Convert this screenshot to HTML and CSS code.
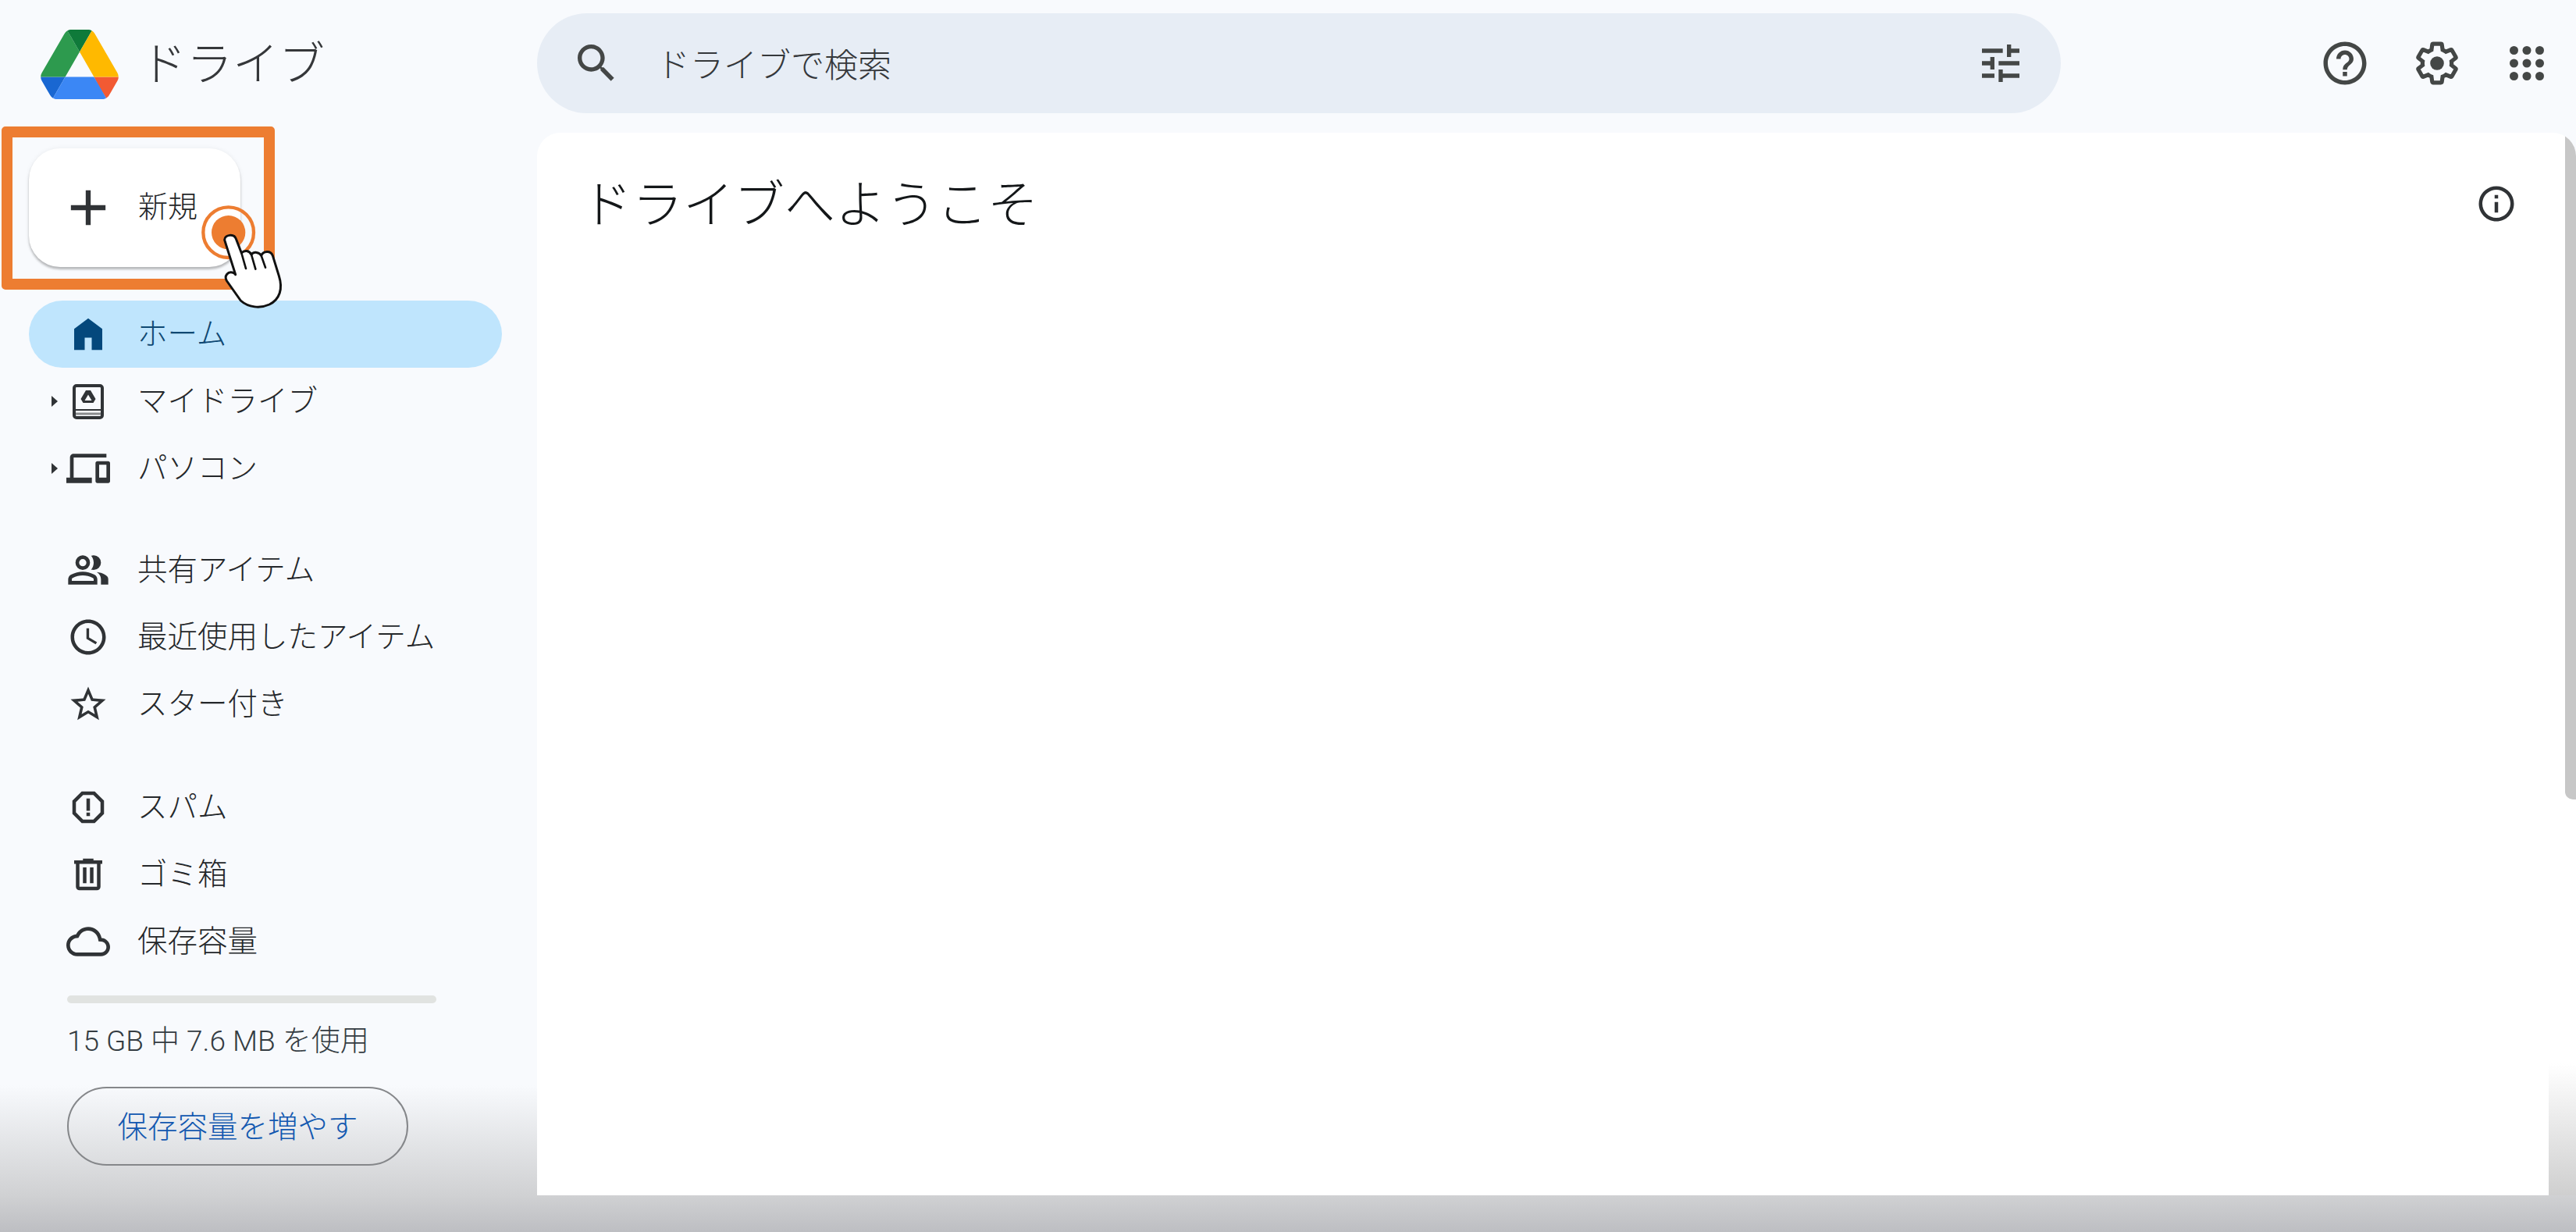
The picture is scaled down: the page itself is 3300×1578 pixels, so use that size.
FILE: index.html
```html
<!DOCTYPE html>
<html lang="ja">
<head>
    <meta charset="UTF-8">
    <meta name="viewport" content="width=device-width, initial-scale=1.0">
    <title>ドライブ</title>
    <link rel="stylesheet" href="styles.css">
</head>
<body>
    <header class="topbar">
        <div class="brand">
            <svg class="brand-logo" viewBox="0 0 87.3 78">
                <path d="m6.6 66.85 3.85 6.65c.8 1.4 1.95 2.5 3.3 3.3l13.75-23.8h-27.5c0 1.55.4 3.1 1.2 4.5z" fill="#1967d2"/>
                <path d="m43.65 25-13.75-23.8c-1.35.8-2.5 1.9-3.3 3.3l-25.4 44a9.06 9.06 0 0 0 -1.2 4.5h27.5z" fill="#2d9a4e"/>
                <path d="m73.55 76.8c1.35-.8 2.5-1.9 3.3-3.3l1.6-2.75 7.65-13.25c.8-1.4 1.2-2.95 1.2-4.5h-27.502l5.852 11.5z" fill="#f25a33"/>
                <path d="m43.65 25 13.75-23.8c-1.35-.8-2.9-1.2-4.5-1.2h-18.5c-1.6 0-3.15.45-4.5 1.2z" fill="#0f7a3a"/>
                <path d="m59.8 53h-32.3l-13.75 23.8c1.35.8 2.9 1.2 4.5 1.2h50.8c1.6 0 3.15-.45 4.5-1.2z" fill="#3b87f5"/>
                <path d="m73.4 26.5-12.7-22c-.8-1.4-1.95-2.5-3.3-3.3l-13.75 23.8 16.15 28h27.45c0-1.55-.4-3.1-1.2-4.5z" fill="#ffb900"/>
            </svg>
            <span class="brand-name">ドライブ</span>
        </div>
        <div class="search">
            <svg class="search-icon" viewBox="0 0 24 24"><path d="M15.5 14h-.79l-.28-.27C15.41 12.59 16 11.11 16 9.5 16 5.91 13.09 3 9.5 3S3 5.91 3 9.5 5.91 16 9.5 16c1.61 0 3.09-.59 4.23-1.57l.27.28v.79l5 4.99L20.49 19l-4.99-5zm-6 0C7.01 14 5 11.99 5 9.5S7.01 5 9.5 5 14 7.01 14 9.5 11.99 14 9.5 14z"/></svg>
            <span class="search-text">ドライブで検索</span>
            <svg class="search-icon" viewBox="0 0 24 24"><path d="M3 17v2h6v-2H3zM3 5v2h10V5H3zm10 16v-2h8v-2h-8v-2h-2v6h2zM7 9v2H3v2h4v2h2V9H7zm14 4v-2H11v2h10zm-6-4h2V7h4V5h-4V3h-2v6z"/></svg>
        </div>
        <div class="actions">
            <svg class="action-icon" viewBox="0 0 24 24"><path d="M11 18h2v-2h-2v2zm1-16C6.48 2 2 6.48 2 12s4.48 10 10 10 10-4.48 10-10S17.52 2 12 2zm0 18c-4.41 0-8-3.59-8-8s3.59-8 8-8 8 3.59 8 8-3.59 8-8 8zm0-14c-2.21 0-4 1.79-4 4h2c0-1.1.9-2 2-2s2 .9 2 2c0 2-3 1.75-3 5h2c0-2.25 3-2.5 3-5 0-2.21-1.79-4-4-4z"/></svg>
            <svg class="action-icon" viewBox="0 0 24 24">
                <path class="gear-line" d="M19.14 12.94c.04-.3.06-.61.06-.94 0-.32-.02-.64-.07-.94l2.03-1.58c.18-.14.23-.41.12-.61l-1.92-3.32c-.12-.22-.37-.29-.59-.22l-2.39.96c-.5-.38-1.03-.7-1.62-.94l-.36-2.54c-.04-.24-.24-.41-.48-.41h-3.84c-.24 0-.43.17-.47.41l-.36 2.54c-.59.24-1.13.57-1.62.94l-2.39-.96c-.22-.08-.47 0-.59.22L2.74 8.87c-.12.21-.08.47.12.61l2.03 1.58c-.05.3-.09.63-.09.94s.02.64.07.94l-2.03 1.58c-.18.14-.23.41-.12.61l1.92 3.32c.12.22.37.29.59.22l2.39-.96c.5.38 1.03.7 1.62.94l.36 2.54c.05.24.24.41.48.41h3.84c.24 0 .44-.17.47-.41l.36-2.54c.59-.24 1.13-.56 1.62-.94l2.39.96c.22.08.47 0 .59-.22l1.92-3.32c.12-.22.07-.47-.12-.61l-2.01-1.58z"/>
                <circle cx="12" cy="12" r="3.2"/>
            </svg>
            <svg class="apps-icon" viewBox="0 0 60 60">
                <circle cx="13.5" cy="13.5" r="5.5"/><circle cx="30" cy="13.5" r="5.5"/><circle cx="46.5" cy="13.5" r="5.5"/>
                <circle cx="13.5" cy="30" r="5.5"/><circle cx="30" cy="30" r="5.5"/><circle cx="46.5" cy="30" r="5.5"/>
                <circle cx="13.5" cy="46.5" r="5.5"/><circle cx="30" cy="46.5" r="5.5"/><circle cx="46.5" cy="46.5" r="5.5"/>
            </svg>
        </div>
    </header>

    <div class="layout">
        <nav class="sidebar">
            <button class="new-button">
                <svg class="plus-icon" viewBox="0 0 24 24"><path d="M19 13h-6v6h-2v-6H5v-2h6V5h2v6h6v2z"/></svg>
                <span class="new-label">新規</span>
                <span class="callout-frame"></span>
                <svg class="callout-hand" viewBox="0 0 375 465">
                    <circle class="ring" cx="128" cy="143" r="97"/>
                    <circle class="dot" cx="128" cy="143" r="65"/>
                    <path class="hand" d="M113 172 C113 152 150 145 158 170 L178 222 C190 210 208 212 216 228 C226 216 246 218 254 232 C262 214 290 212 298 232 L322 310 C338 360 325 400 285 420 C250 436 205 432 175 405 L122 330 C110 312 125 288 150 300 L155 305 Z"/>
                    <path class="hand-line" d="M178 222 L195 282 M216 228 L232 284 M254 232 L270 278"/>
                </svg>
            </button>

            <div class="nav-group first-group">
                <a class="nav-row active">
                    <span class="arrow-slot"></span>
                    <span class="nav-icon"><svg viewBox="0 0 24 24" width="54" height="54"><path d="M4 21V9l8-6 8 6v12h-6v-7h-4v7H4z"/></svg></span>
                    <span class="nav-label">ホーム</span>
                </a>
                <a class="nav-row">
                    <span class="arrow-slot"><i class="arrow"></i></span>
                    <span class="nav-icon">
                        <svg viewBox="0 0 40 45" width="40" height="45">
                            <rect class="book" x="2" y="2" width="36" height="41" rx="3"/>
                            <path class="book-line" d="M2 33h36"/>
                            <path class="book-shelf" d="M4 38h32"/>
                            <path d="M17 8h6l6.500 11-3 5H13.500l-3-5zM20 13.500l-4.500 7.500h9z" fill-rule="evenodd"/>
                        </svg>
                    </span>
                    <span class="nav-label">マイドライブ</span>
                </a>
                <a class="nav-row">
                    <span class="arrow-slot"><i class="arrow"></i></span>
                    <span class="nav-icon"><svg viewBox="0 0 24 24" width="56" height="56"><path d="M4 6h18V4H4c-1.100 0-2 .9-2 2v11H0v3h14v-3H4V6zm19 2h-6c-.55 0-1 .45-1 1v10c0 .55.45 1 1 1h6c.55 0 1-.45 1-1V9c0-.55-.45-1-1-1zm-1 9h-4v-7h4v7z"/></svg></span>
                    <span class="nav-label">パソコン</span>
                </a>
            </div>

            <div class="nav-group shared-group">
                <a class="nav-row">
                    <span class="arrow-slot"></span>
                    <span class="nav-icon"><svg viewBox="0 0 24 24" width="56" height="56"><path d="M1 20v-2.800q0-.85.44-1.560.43-.7 1.160-1.070 1.550-.78 3.150-1.170Q7.350 13 9 13t3.250.39q1.600.39 3.150 1.170.73.37 1.160 1.070.44.7.44 1.560V20H1zm18 0v-3q0-1.100-.61-2.110-.61-1.010-1.740-1.740 1.280.15 2.400.51 1.130.37 2.100.89.9.5 1.380 1.110.47.61.47 1.340v3h-4zM9 12q-1.650 0-2.830-1.180Q5 9.650 5 8t1.180-2.830Q7.350 4 9 4t2.830 1.180Q13 6.350 13 8t-1.180 2.830Q10.650 12 9 12zm10-4q0 1.650-1.180 2.830Q16.650 12 15 12q-.27 0-.7-.06t-.7-.14q.68-.8 1.040-1.770.36-.98.36-2.030t-.36-2.020Q14.280 5 13.600 4.200q.35-.12.7-.16.35-.04.7-.04 1.650 0 2.830 1.180Q19 6.350 19 8zM3 18h12v-.8q0-.28-.14-.5-.14-.22-.36-.35-1.350-.68-2.730-1.010Q10.400 15 9 15t-2.770.34q-1.380.33-2.730 1.010-.23.13-.37.35-.13.22-.13.5v.8zm6-8q.83 0 1.410-.59Q11 8.830 11 8t-.59-1.410Q9.830 6 9 6t-1.410.59Q7 7.180 7 8t.59 1.410Q8.180 10 9 10z"/></svg></span>
                    <span class="nav-label">共有アイテム</span>
                </a>
                <a class="nav-row">
                    <span class="arrow-slot"></span>
                    <span class="nav-icon"><svg viewBox="0 0 24 24" width="54" height="54"><path d="M11.990 2C6.470 2 2 6.480 2 12s4.470 10 9.990 10C17.520 22 22 17.520 22 12S17.520 2 11.990 2zM12 20c-4.420 0-8-3.580-8-8s3.580-8 8-8 8 3.580 8 8-3.580 8-8 8zm.5-13H11v6l5.250 3.150.75-1.230-4.500-2.670V7z"/></svg></span>
                    <span class="nav-label">最近使用したアイテム</span>
                </a>
                <a class="nav-row">
                    <span class="arrow-slot"></span>
                    <span class="nav-icon"><svg viewBox="0 0 24 24" width="54" height="54"><path d="M22 9.240l-7.190-.62L12 2 9.190 8.630 2 9.240l5.460 4.730L5.820 21 12 17.270 18.180 21l-1.630-7.030L22 9.240zM12 15.400l-3.760 2.270 1-4.280-3.320-2.880 4.380-.38L12 6.100l1.710 4.040 4.380.38-3.320 2.880 1 4.280L12 15.400z"/></svg></span>
                    <span class="nav-label">スター付き</span>
                </a>
            </div>

            <div class="nav-group spam-group">
                <a class="nav-row">
                    <span class="arrow-slot"></span>
                    <span class="nav-icon"><svg viewBox="0 0 24 24" width="54" height="54"><path d="M15.730 3H8.270L3 8.270v7.460L8.270 21h7.460L21 15.730V8.270L15.730 3zM19 14.900L14.900 19H9.100L5 14.900V9.100L9.100 5h5.800L19 9.100v5.800z"/><path d="M11 7h2v7h-2zM11 15h2v2h-2z"/></svg></span>
                    <span class="nav-label">スパム</span>
                </a>
                <a class="nav-row">
                    <span class="arrow-slot"></span>
                    <span class="nav-icon"><svg viewBox="0 0 24 24" width="54" height="54"><path d="M7 21q-.825 0-1.410-.59Q5 19.825 5 19V6H4V4h5V3h6v1h5v2h-1v13q0 .825-.59 1.410Q17.825 21 17 21H7zM17 6H7v13h10V6zM9 17h2V8H9v9zm4 0h2V8h-2v9z"/></svg></span>
                    <span class="nav-label">ゴミ箱</span>
                </a>
                <a class="nav-row">
                    <span class="arrow-slot"></span>
                    <span class="nav-icon"><svg viewBox="0 0 24 24" width="56" height="56"><path d="M19.350 10.040C18.670 6.590 15.640 4 12 4 9.110 4 6.600 5.640 5.350 8.040 2.340 8.360 0 10.910 0 14c0 3.310 2.690 6 6 6h13c2.760 0 5-2.240 5-5 0-2.640-2.050-4.780-4.650-4.960zM19 18H6c-2.210 0-4-1.790-4-4 0-2.050 1.530-3.760 3.560-3.970l1.070-.11.5-.95C8.080 7.140 9.940 6 12 6c2.620 0 4.880 1.860 5.390 4.430l.3 1.500 1.530.11c1.560.1 2.780 1.410 2.780 2.960 0 1.650-1.350 3-3 3z"/></svg></span>
                    <span class="nav-label">保存容量</span>
                </a>
            </div>

            <div class="storage">
                <div class="storage-bar"></div>
                <div class="storage-text">15 GB 中 7.6 MB を使用</div>
                <button class="storage-button">保存容量を増やす</button>
            </div>
        </nav>

        <main class="content">
            <section class="panel">
                <h1>ドライブへようこそ</h1>
                <svg class="info-icon" viewBox="0 0 24 24"><path d="M11 7h2v2h-2zm0 4h2v6h-2zm1-9C6.480 2 2 6.480 2 12s4.480 10 10 10 10-4.480 10-10S17.520 2 12 2zm0 18c-4.410 0-8-3.590-8-8s3.590-8 8-8 8 3.590 8 8-3.590 8-8 8z"/></svg>
            </section>
            <div class="track">
                <div class="thumb"></div>
            </div>
        </main>
    </div>
</body>
</html>
```

FILE: styles.css
```css
* {
    box-sizing: border-box;
}
body {
    margin: 0;
    width: 3300px;
    height: 1578px;
    overflow: hidden;
    font-family: "Roboto", "Noto Sans CJK JP", sans-serif;
    font-size: 38.5px;
    font-weight: 300;
    color: #24272a;
    background: linear-gradient(to bottom, #f8fafd 1390px, #d0d1d3 1531px, #bdbec2 1578px);
}
svg {
    fill: #303336;
    display: block;
}

/* top bar */
.topbar {
    display: flex;
    align-items: center;
    height: 170px;
    padding-bottom: 8px;
}
.brand {
    display: flex;
    align-items: center;
    width: 688px;
    padding-left: 52px;
}
.brand-logo {
    width: 100px;
    height: 89px;
    margin-top: 2px;
}
.brand-name {
    margin: 0 0 8px 28px;
    font-size: 59px;
    color: #35373a;
}
.search {
    display: flex;
    align-items: center;
    width: 1952px;
    height: 128px;
    padding: 0 45px 0 44px;
    background-color: #e7edf5;
    border-radius: 64px;
}
.search-icon {
    width: 64px;
    height: 64px;
    fill: #444746;
}
.search-text {
    flex: 1;
    margin: 0 0 2px 45px;
    font-size: 43px;
    color: #35383b;
}
.actions {
    display: flex;
    align-items: center;
    gap: 52px;
    margin-left: auto;
    padding-right: 33px;
}
.action-icon {
    width: 66px;
    height: 66px;
    fill: #444746;
}
.gear-line {
    fill: none;
    stroke: #444746;
    stroke-width: 2;
    transform: scale(.94);
    transform-origin: 12px 12px;
}
.apps-icon {
    width: 60px;
    height: 60px;
    fill: #444746;
}

.layout {
    display: flex;
}

/* left column */
.sidebar {
    width: 688px;
    padding: 20px 0 0 37px;
    flex-shrink: 0;
}
.new-button {
    position: relative;
    display: flex;
    align-items: center;
    width: 271px;
    height: 152px;
    padding: 0 0 0 38px;
    border: none;
    border-radius: 40px;
    background-color: white;
    box-shadow: 0 3px 3px rgba(0, 0, 0, 0.25), 0 0 6px rgba(0, 0, 0, 0.06);
    font-family: inherit;
    font-size: 38px;
    font-weight: 300;
    color: #24272a;
}
.plus-icon {
    width: 76px;
    height: 76px;
    margin-right: 26px;
}
.new-label {
    margin-bottom: 10px;
}
.callout-frame {
    position: absolute;
    top: -28px;
    left: -35px;
    width: 350px;
    height: 209px;
    border: 14px solid #ed7d31;
    border-radius: 5px;
}
.callout-hand {
    position: absolute;
    top: 60px;
    left: 213px;
    width: 125px;
    height: 155px;
    z-index: 2;
}
.ring {
    fill: none;
    stroke: #ed7d31;
    stroke-width: 13;
}
.dot {
    fill: #ed7d31;
}
.hand {
    fill: white;
    stroke: #111;
    stroke-width: 9;
    stroke-linejoin: round;
}
.hand-line {
    fill: none;
    stroke: #111;
    stroke-width: 8;
    stroke-linecap: round;
}

.nav-group {
    width: 606px;
}
.first-group {
    margin-top: 43px;
}
.shared-group {
    margin-top: 42px;
}
.spam-group {
    margin-top: 46px;
}
.nav-row {
    display: flex;
    align-items: center;
    height: 86px;
    padding-left: 29px;
    border-radius: 43px;
}
.nav-row.active {
    background-color: #bfe5fd;
    color: #0f4872;
}
.nav-row.active svg {
    fill: #04487c;
}
.nav-label {
    margin: 0 0 5px -2px;
}
.first-group .nav-label {
    margin-bottom: 8px;
}
.arrow-slot {
    display: flex;
    width: 18px;
}
.arrow {
    width: 0;
    height: 0;
    border-top: 7px solid transparent;
    border-bottom: 7px solid transparent;
    border-left: 8px solid #303336;
}
.nav-icon {
    display: flex;
    justify-content: center;
    width: 58px;
    margin-right: 36px;
}
.shared-group .nav-icon, .spam-group .nav-icon {
    margin-top: 3px;
}
.book {
    fill: none;
    stroke: #303336;
    stroke-width: 4;
}
.book-line {
    fill: none;
    stroke: #303336;
    stroke-width: 2;
}
.book-shelf {
    fill: none;
    stroke: #8a8c8e;
    stroke-width: 3;
}

.storage {
    padding-left: 49px;
}
.storage-bar {
    width: 473px;
    height: 10px;
    margin-top: 28px;
    background-color: #e1e3e1;
    border-radius: 5px;
}
.storage-text {
    margin-top: 18px;
    font-size: 37px;
    color: #343c42;
}
.storage-button {
    display: block;
    width: 437px;
    height: 101px;
    margin-top: 35px;
    padding-bottom: 6px;
    border: 2px solid #85878a;
    border-radius: 51px;
    background: transparent;
    font-family: inherit;
    font-size: 38.5px;
    font-weight: 300;
    color: #1258b0;
}

/* right column */
.content {
    display: flex;
    width: 2612px;
    height: 1361px;
    border-radius: 30px 30px 0 0;
    overflow: hidden;
}
.panel {
    display: flex;
    justify-content: space-between;
    align-items: flex-start;
    width: 2577px;
    height: 100%;
    padding: 64px 40px 0 57px;
    background-color: white;
}
h1 {
    margin: 0;
    font-size: 65px;
    font-weight: 300;
    line-height: 58px;
    color: #141719;
}
.info-icon {
    width: 54px;
    height: 54px;
}
.track {
    display: flex;
    justify-content: flex-end;
    width: 35px;
    background: linear-gradient(to bottom, white 1192px, #cfcfcf 1361px);
}
.thumb {
    width: 14px;
    height: 854px;
    background-color: #c7c7c7;
    border-radius: 0 0 0 10px;
}
```
